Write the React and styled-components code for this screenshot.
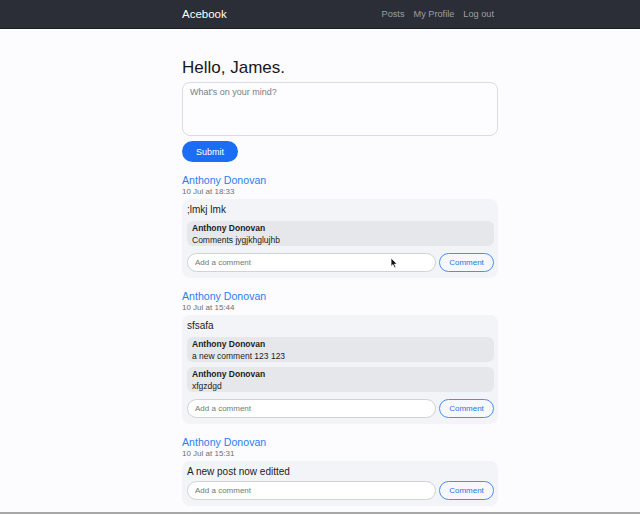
import React from 'react'
import styled, { createGlobalStyle } from 'styled-components'

const GlobalStyle = createGlobalStyle`
  * {
    box-sizing: border-box;
  }
  body {
    margin: 0;
    background: #fcfbfd;
    font-family: 'Liberation Sans', Arial, sans-serif;
    color: #212529;
  }
`

const posts = [
  {
    id: 1,
    date: '10 Jul at 18:33',
    body: ';lmkj lmk',
    comments: [{ id: 1, text: 'Comments jygjkhglujhb' }],
  },
  {
    id: 2,
    date: '10 Jul at 15:44',
    body: 'sfsafa',
    comments: [
      { id: 2, text: 'a new comment 123 123' },
      { id: 3, text: 'xfgzdgd' },
    ],
  },
  {
    id: 3,
    date: '10 Jul at 15:31',
    body: 'A new post now editted',
    comments: [],
  },
]

const Cursor = () => (
  <CursorMark viewBox='0 0 8 12' width='8' height='12'>
    <path
      d='M1 1 L1 9.5 L3 7.6 L4.6 11 L6 10.4 L4.5 7.1 L7.2 7.1 Z'
      fill='#111'
      stroke='#fff'
      strokeWidth='0.8'
      strokeLinejoin='round'
    />
  </CursorMark>
)

const App = () => {
  return (
    <Page>
      <GlobalStyle />
      <Navbar>
        <NavInner>
          <Brand href='#'>Acebook</Brand>
          <NavLinks>
            <NavLink href='#'>Posts</NavLink>
            <NavLink href='#'>My Profile</NavLink>
            <NavLink href='#'>Log out</NavLink>
          </NavLinks>
        </NavInner>
      </Navbar>
      <Container>
        <Greeting>Hello, James.</Greeting>
        <PostBox placeholder="What's on your mind?" />
        <SubmitButton>Submit</SubmitButton>
        <Feed>
          {posts.map((post) => (
            <Post key={post.id}>
              <Author href='#'>Anthony Donovan</Author>
              <PostDate>{post.date}</PostDate>
              <Card>
                <PostText>{post.body}</PostText>
                {post.comments.length > 0 && (
                  <CommentList>
                    {post.comments.map((c) => (
                      <Bubble key={c.id}>
                        <BubbleAuthor>Anthony Donovan</BubbleAuthor>
                        <BubbleText>{c.text}</BubbleText>
                      </Bubble>
                    ))}
                  </CommentList>
                )}
                <CommentForm>
                  <CommentInput placeholder='Add a comment' />
                  <CommentButton>Comment</CommentButton>
                </CommentForm>
              </Card>
            </Post>
          ))}
        </Feed>
      </Container>
      <Cursor />
    </Page>
  )
}

const Page = styled.div`
  position: relative;
  height: 514px;
  overflow: hidden;
  border-bottom: 2px solid #a7a7a7;
`

const Navbar = styled.nav`
  height: 29px;
  background: #2b2e36;
  border-bottom: 1px solid #1c1e23;
`

const NavInner = styled.div`
  width: 316px;
  margin-left: 182px;
  height: 100%;
  display: flex;
  align-items: center;
  justify-content: space-between;
`

const Brand = styled.a`
  color: #ffffff;
  font-size: 11.5px;
  font-weight: 500;
  text-decoration: none;
`

const NavLinks = styled.div`
  display: flex;
  gap: 9px;
  padding-right: 4px;
`

const NavLink = styled.a`
  color: #9c9ea3;
  font-size: 9.2px;
  text-decoration: none;
`

const Container = styled.main`
  width: 316px;
  margin-left: 182px;
`

const Greeting = styled.h1`
  margin: 27px 0 0;
  font-size: 17px;
  line-height: 24px;
  font-weight: 500;
  color: #16181b;
`

const PostBox = styled.textarea`
  display: block;
  width: 100%;
  height: 54px;
  margin-top: 2px;
  padding: 4px 7px;
  border: 1px solid #dcdce0;
  border-radius: 8px;
  background: #fdfcfe;
  font-family: inherit;
  font-size: 9px;
  line-height: 11px;
  resize: none;
  &::placeholder {
    color: #7c7d84;
  }
`

const SubmitButton = styled.button`
  display: block;
  margin-top: 5px;
  width: 56px;
  height: 21px;
  border: none;
  border-radius: 11px;
  background: #1b6ef3;
  color: #ffffff;
  font-family: inherit;
  font-size: 9px;
  padding: 0;
`

const Feed = styled.section`
  margin-top: 12px;
  display: flex;
  flex-direction: column;
  gap: 12px;
`

const Post = styled.article`
  display: flex;
  flex-direction: column;
`

const Author = styled.a`
  font-size: 10.6px;
  line-height: 13px;
  color: #2d7ef0;
  text-decoration: none;
`

const PostDate = styled.div`
  font-size: 8px;
  line-height: 10px;
  color: #6d7077;
`

const Card = styled.div`
  margin-top: 2px;
  padding: 2px 4px 6px 5px;
  background: #f3f4f8;
  border-radius: 8px;
`

const PostText = styled.p`
  margin: 0;
  font-size: 10px;
  line-height: 18px;
  color: #1e2125;
`

const CommentList = styled.div`
  margin: 2px 0 7px;
  display: flex;
  flex-direction: column;
  gap: 5px;
`

const Bubble = styled.div`
  padding: 0.5px 5px;
  background: #e6e7eb;
  border-radius: 6px;
  font-size: 8.5px;
  line-height: 12px;
  color: #1b1d20;
`

const BubbleAuthor = styled.div`
  font-weight: 700;
`

const BubbleText = styled.div``

const CommentForm = styled.form`
  display: flex;
  gap: 3px;
`

const CommentInput = styled.input`
  flex: 1;
  min-width: 0;
  height: 19px;
  padding: 0 7px;
  border: 1px solid #d0d2d7;
  border-radius: 10px;
  background: #ffffff;
  font-family: inherit;
  font-size: 8px;
  &::placeholder {
    color: #74767c;
  }
`

const CommentButton = styled.button`
  width: 55px;
  height: 19px;
  padding: 0;
  border: 1px solid #4b8ff1;
  border-radius: 10px;
  background: #f7f8fc;
  color: #2a74e4;
  font-family: inherit;
  font-size: 8px;
`

const CursorMark = styled.svg`
  position: absolute;
  left: 390px;
  top: 257px;
`

export default App
